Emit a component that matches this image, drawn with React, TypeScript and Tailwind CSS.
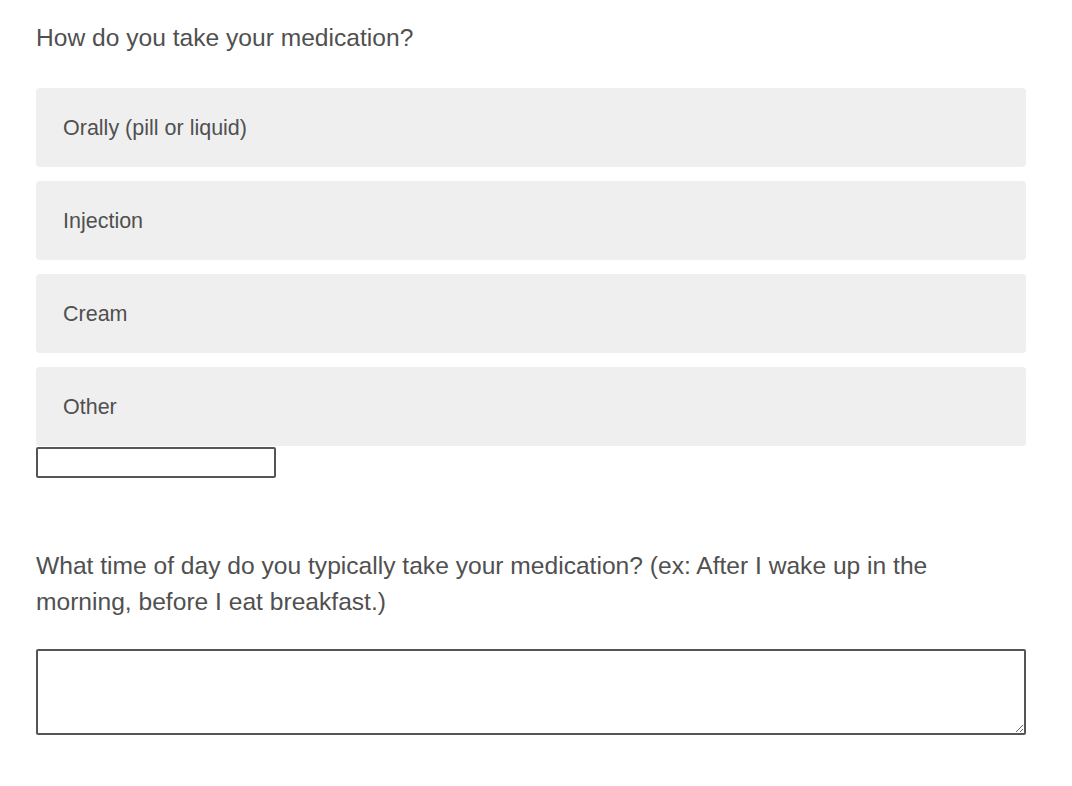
export default function App() {
  const options = ['Orally (pill or liquid)', 'Injection', 'Cream', 'Other']

  return (
    <div className="min-h-screen bg-white font-['Liberation_Sans',Arial,sans-serif] text-[#505050]">
      <div className="w-[990px] ml-9 pt-[24px]">

        {/* Question 1 */}
        <p className="text-[24.6px] leading-[28px]">How do you take your medication?</p>

        <div className="mt-[36px] flex flex-col gap-[14px]">
          {options.map((opt) => (
            <div key={opt} className="h-[79px] flex items-center pl-[27px] pt-[2px] rounded-[4px] bg-[#efefef] text-[21.5px]">
              {opt}
            </div>
          ))}
        </div>
        <input type="text" className="block w-[240px] h-[31px] border-2 border-[#555] rounded-[2px] mt-px bg-white" />

        {/* Question 2 */}
        <p className="mt-[70px] max-w-[960px] text-[24.6px] leading-[36px]">
          What time of day do you typically take your medication? (ex: After I wake up in the morning, before I eat breakfast.)
        </p>
        <textarea className="block mt-[29px] w-[990px] h-[86px] border-2 border-[#555] rounded-[2px] bg-white" />
      </div>
    </div>
  )
}
